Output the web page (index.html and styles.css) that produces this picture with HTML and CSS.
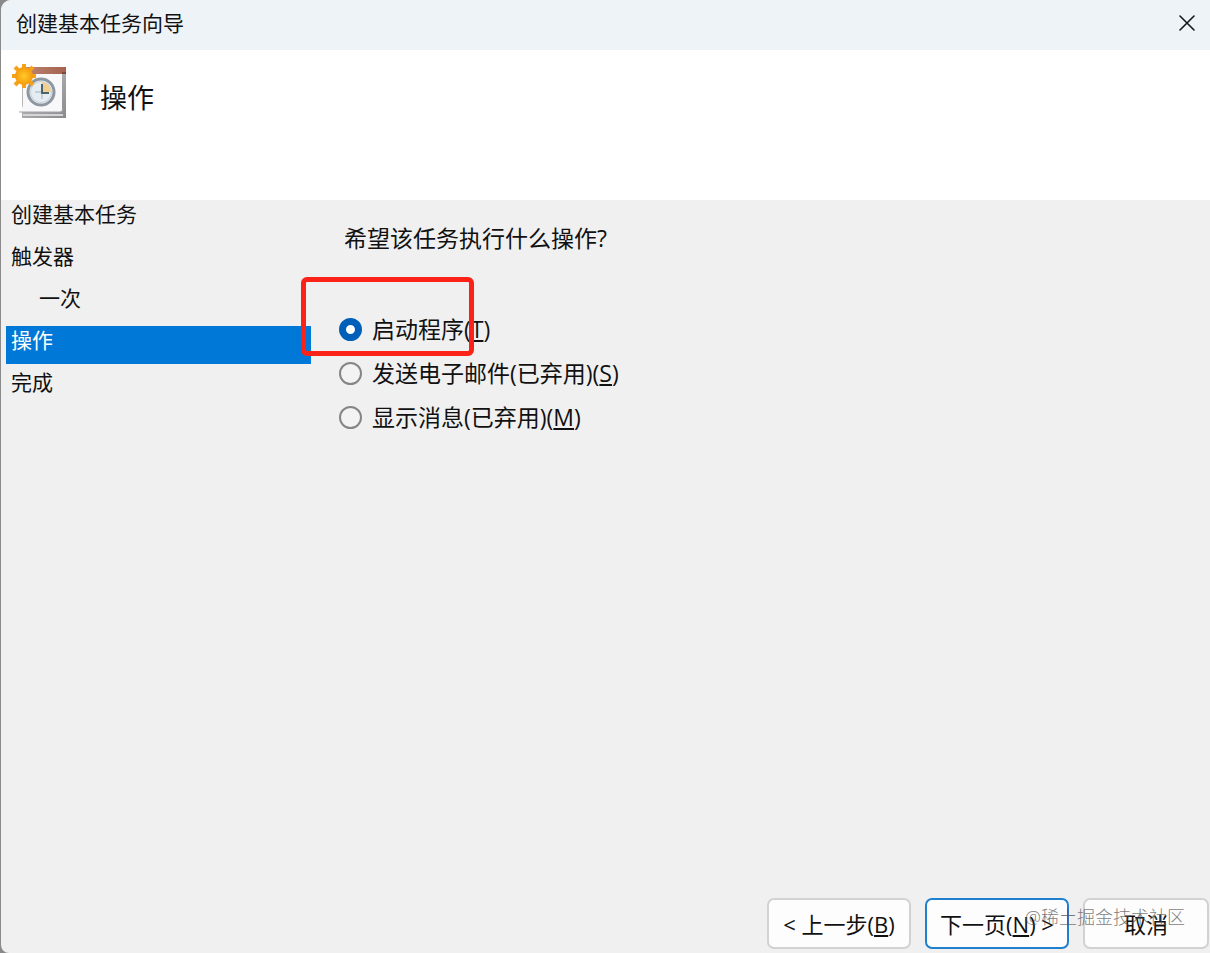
FILE: index.html
```html
<!DOCTYPE html>
<html lang="zh-CN">
<head>
    <meta charset="UTF-8">
    <meta name="viewport" content="width=device-width, initial-scale=1.0">
    <title>创建基本任务向导</title>
    <link rel="stylesheet" href="styles.css">
</head>

<body>
    <div class="wizard">
        <header class="title-bar">
            <h1>创建基本任务向导</h1>
            <button type="button" class="close" aria-label="关闭">
                <svg width="16" height="16" viewBox="0 0 16 16" fill="none" stroke="#15191d" stroke-width="1.6" stroke-linecap="round">
                    <path d="M1 1l14 14M15 1L1 15"/>
                </svg>
            </button>
        </header>

        <div class="banner">
            <svg class="task-icon" width="56" height="56" viewBox="0 0 56 56">
                <defs>
                    <linearGradient id="bar" x1="0" x2="1">
                        <stop offset="0" stop-color="#bd8674"/>
                        <stop offset="1" stop-color="#a5614e"/>
                    </linearGradient>
                    <linearGradient id="edge" x1="0" y1="0" x2="1" y2="1">
                        <stop offset="0" stop-color="#c9c9cb"/>
                        <stop offset="1" stop-color="#8a8a8e"/>
                    </linearGradient>
                    <radialGradient id="sun">
                        <stop offset="0" stop-color="#ffca28"/>
                        <stop offset="1" stop-color="#f59a0c"/>
                    </radialGradient>
                </defs>
                <!-- calendar -->
                <path d="M10 4h44v50H10z" fill="url(#edge)"/>
                <path d="M11 51h40" stroke="#d5d5d7" stroke-width="2"/>
                <path d="M11 9h39v37q0 2-2 2H7q4-3 4-9z" fill="#f8f8fa"/>
                <path d="M7 48h41q3 0 3-4" fill="none" stroke="#a3a3a7"/>
                <path d="M11 3h43v7H11z" fill="url(#bar)"/>
                <path d="M50 9h4" stroke="#7e493c" stroke-width="2"/>
                <!-- clock -->
                <circle cx="29" cy="28" r="13" fill="#e5edf2" stroke="#8e979f" stroke-width="3"/>
                <circle cx="29" cy="28" r="10.500" fill="none" stroke="#c9d1d7"/>
                <path d="M30 28V18a10 10 0 0 1 9 10z" fill="#f2cf8f"/>
                <path d="M30 20v9h7" fill="none" stroke="#486571" stroke-width="2"/>
                <path d="M23 28h6M30 30v5" stroke="#9fb4bd"/>
                <!-- sun -->
                <g stroke="#f5a11b" stroke-width="4">
                    <path d="M12 0v24M0 12h24M3 3l18 18M21 3L3 21"/>
                </g>
                <circle cx="12" cy="12" r="9" fill="url(#sun)"/>
            </svg>
            <h2>操作</h2>
        </div>

        <div class="content">
            <ul class="steps">
                <li>创建基本任务</li>
                <li>触发器</li>
                <li class="sub">一次</li>
                <li class="active" aria-current="step">操作</li>
                <li>完成</li>
            </ul>

            <form class="actions">
                <fieldset>
                    <legend>希望该任务执行什么操作?</legend>
                    <div class="options">
                        <label><input type="radio" name="action" checked><span>启动程序(<u>T</u>)</span></label>
                        <label><input type="radio" name="action"><span>发送电子邮件(已弃用)(<u>S</u>)</span></label>
                        <label><input type="radio" name="action"><span>显示消息(已弃用)(<u>M</u>)</span></label>
                        <div class="marker"></div>
                    </div>
                </fieldset>
            </form>
        </div>

        <footer class="buttons">
            <button type="button" class="btn">&lt; 上一步(<u>B</u>)</button>
            <button type="button" class="btn primary">下一页(<u>N</u>) &gt;</button>
            <button type="button" class="btn cancel">取消</button>
            <span class="watermark">@稀土掘金技术社区</span>
        </footer>
    </div>
</body>
</html>
```

FILE: styles.css
```css
* {
    box-sizing: border-box;
}

body {
    margin: 0;
    background: #8a8a8a;
    color: #111;
    font-family: "Open Sans", "Noto Sans CJK SC", sans-serif;
    font-size: 21px;
    line-height: 30px;
}

h1, h2 {
    margin: 0;
    font-weight: 400;
}

u {
    text-decoration-thickness: 2px;
    text-underline-offset: 2px;
}

.wizard {
    display: flex;
    flex-direction: column;
    min-height: 100vh;
    margin-left: 1px;
    background: #f0f0f0;
    border-radius: 10px 0 0 8px;
    overflow: hidden;
}

.title-bar {
    display: flex;
    align-items: center;
    justify-content: space-between;
    height: 50px;
    padding: 0 15px 4px;
    background: #eef3f8;
}

.title-bar h1 {
    font-size: 21px;
}

.close {
    display: flex;
    padding: 0;
    border: 0;
    background: none;
}

.banner {
    display: flex;
    align-items: flex-start;
    gap: 32px;
    height: 150px;
    padding: 14px 11px;
    background: #fff;
}

.banner h2 {
    padding-top: 14px;
    font-size: 27px;
    line-height: 40px;
}

.content {
    display: flex;
    flex: 1;
}

.steps {
    display: flex;
    flex-direction: column;
    gap: 4px;
    width: 310px;
    margin: 0;
    padding: 0 0 0 5px;
    list-style: none;
    line-height: 28px;
}

.steps li {
    height: 38px;
    padding-left: 5px;
}

.steps .sub {
    padding-left: 33px;
}

.steps .active {
    background: #0078d7;
    color: #fff;
}

.actions {
    flex: 1;
    padding: 22px 28px;
    font-size: 23px;
}

fieldset {
    margin: 0;
    padding: 0;
    border: 0;
}

legend {
    padding: 0 5px;
    line-height: 32px;
}

.options {
    position: relative;
    display: flex;
    flex-direction: column;
    align-items: flex-start;
    gap: 12px;
    padding-top: 59px;
}

.options label {
    display: flex;
    align-items: center;
    gap: 10px;
    line-height: 32px;
}

.options input {
    appearance: none;
    width: 23px;
    height: 23px;
    margin: 0;
    border: 2px solid #858585;
    border-radius: 50%;
    background: #f3f3f3;
}

.options input:checked {
    border: 7px solid #005fb8;
    background: #fff;
}

/* highlight around the first option */
.marker {
    position: absolute;
    top: 23px;
    left: -38px;
    width: 173px;
    height: 79px;
    border: 5px solid #fb2217;
    border-radius: 6px;
    pointer-events: none;
}

.buttons {
    position: relative;
    display: flex;
    justify-content: flex-end;
    gap: 14px;
    padding: 0 1px 4px;
}

.btn {
    width: 144px;
    height: 51px;
    padding: 0;
    border: 2px solid #d2d2d2;
    border-radius: 7px;
    background: #fdfdfd;
    color: #111;
    font: inherit;
    font-size: 22px;
}

.btn.primary {
    border-color: #1f80d0;
}

.btn.cancel {
    width: 126px;
}

.watermark {
    position: absolute;
    right: 25px;
    bottom: 21px;
    color: rgba(80, 80, 80, 0.75);
    font-size: 18px;
    font-weight: 300;
    pointer-events: none;
}
```
